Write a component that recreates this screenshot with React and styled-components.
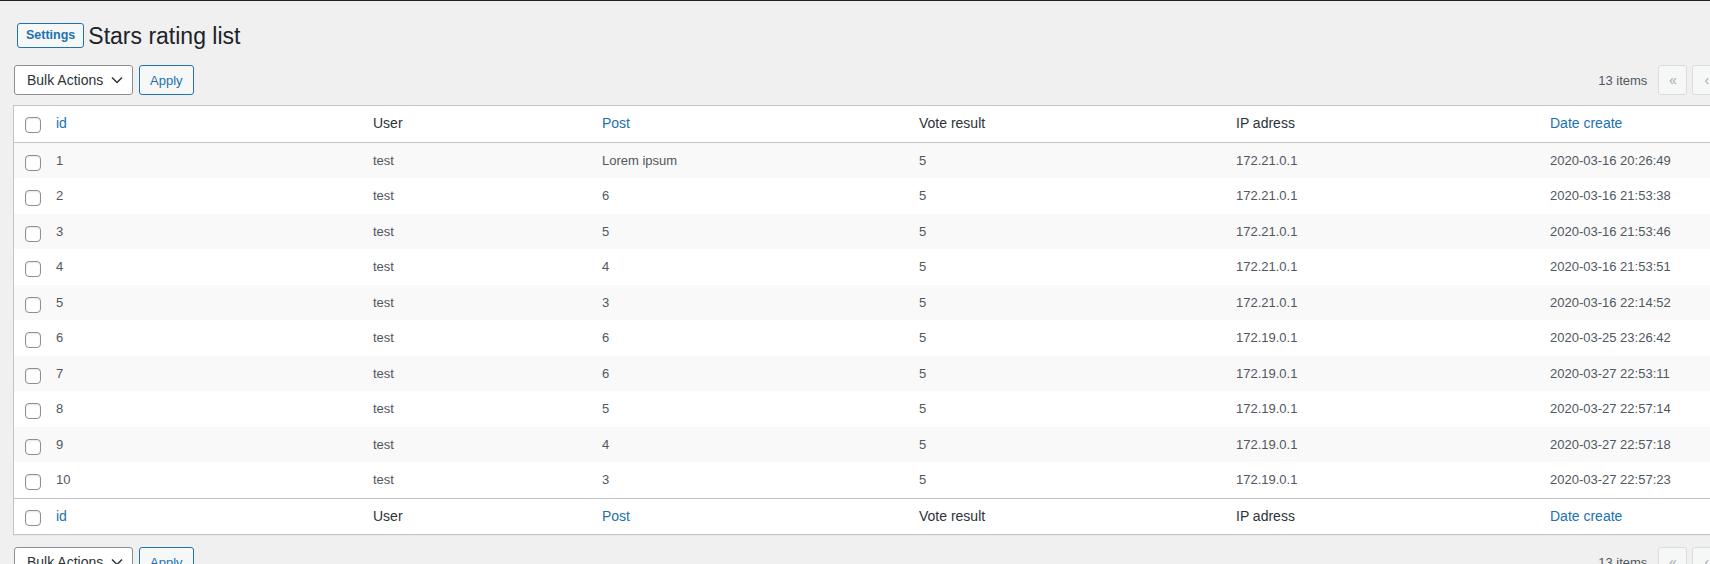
import React from 'react'
import styled, { createGlobalStyle } from 'styled-components';

const GlobalStyle = createGlobalStyle`
  html, body {
    margin: 0;
    padding: 0;
    background: #f0f0f1;
    overflow: hidden;
  }
  body {
    font-family: "Liberation Sans", Arial, sans-serif;
    font-size: 13px;
    color: #3c434a;
  }
`;

let Wrap = styled.div`
  width: 1880px;
  border-top: 1px solid #1d2327;
  padding: 22px 0 0 13px;
  box-sizing: border-box;
`;

let TitleRow = styled.div`
  display: flex;
  align-items: center;
  gap: 4px;
  margin-left: 4px;
  height: 25px;
`;

let SettingsButton = styled.a`
  display: inline-block;
  box-sizing: border-box;
  height: 25px;
  padding: 0 8px;
  line-height: 23px;
  border: 1px solid #2271b1;
  border-radius: 3px;
  background: #f6f7f7;
  color: #2271b1;
  font-size: 12.5px;
  font-weight: 600;
  text-decoration: none;
`;

let Title = styled.h1`
  margin: 0;
  padding-top: 3px;
  font-size: 23px;
  font-weight: 400;
  line-height: 1.3;
  color: #1d2327;
`;

let TableNav = styled.div`
  display: flex;
  justify-content: space-between;
  align-items: center;
  width: 1840px;
  height: 30px;
  margin-top: ${p => p.top}px;
`;

let Actions = styled.div`
  display: flex;
  gap: 6px;
  margin-left: 1px;
`;

let SelectBox = styled.div`
  display: flex;
  align-items: center;
  justify-content: space-between;
  box-sizing: border-box;
  width: 119px;
  height: 30px;
  padding: 0 9px 0 12px;
  border: 1px solid #8c8f94;
  border-radius: 3px;
  background: #fff;
  color: #2c3338;
  font-size: 14px;
`;

let ApplyButton = styled.button`
  box-sizing: border-box;
  height: 30px;
  padding: 0 10px;
  border: 1px solid #2271b1;
  border-radius: 3px;
  background: #f6f7f7;
  color: #2271b1;
  font-family: inherit;
  font-size: 13px;
`;

let Pager = styled.div`
  display: flex;
  align-items: center;
  gap: 5px;
  color: #50575e;
`;

let ItemCount = styled.span`
  margin-right: 6px;
`;

let NavButton = styled.span`
  display: flex;
  align-items: center;
  justify-content: center;
  box-sizing: border-box;
  width: 29px;
  height: 30px;
  border: 1px solid ${p => (p.disabled ? '#dcdcde' : '#2271b1')};
  border-radius: 3px;
  background: #f6f7f7;
  color: ${p => (p.disabled ? '#a7aaad' : '#2271b1')};
  font-size: 14px;
`;

let PageInput = styled.span`
  display: flex;
  align-items: center;
  justify-content: center;
  box-sizing: border-box;
  width: 32px;
  height: 30px;
  border: 1px solid #8c8f94;
  border-radius: 4px;
  background: #fff;
  color: #2c3338;
`;

let Table = styled.table`
  width: 1847px;
  table-layout: fixed;
  border-collapse: separate;
  border-spacing: 0;
  margin-top: 10px;
  border: 1px solid #c3c4c7;
  background: #fff;
  box-shadow: 0 1px 1px rgba(0, 0, 0, 0.04);
`;

let HeadCell = styled.th`
  padding: 8px 10px;
  text-align: left;
  font-size: 14px;
  font-weight: 400;
  line-height: 1.4em;
  color: ${p => (p.link ? '#2271b1' : '#2c3338')};
  border-bottom: ${p => (p.foot ? 'none' : '1px solid #c3c4c7')};
  border-top: ${p => (p.foot ? '1px solid #c3c4c7' : 'none')};
`;

let CheckCell = styled.td`
  padding: ${p => (p.head ? '11px' : '12px')} 0 0 11px;
  vertical-align: top;
  border-bottom: ${p => (p.head && !p.foot ? '1px solid #c3c4c7' : 'none')};
  border-top: ${p => (p.foot ? '1px solid #c3c4c7' : 'none')};
`;

let Row = styled.tr`
  background: ${p => (p.odd ? '#f9f9f9' : '#fff')};
`;

let Cell = styled.td`
  padding: 8px 10px;
  font-size: 13px;
  line-height: 1.5em;
  color: #50575e;
  vertical-align: top;
  white-space: nowrap;
`;

let CheckBox = styled.span`
  display: block;
  box-sizing: border-box;
  width: 16px;
  height: 16px;
  border: 1px solid #8c8f94;
  border-radius: 4px;
  background: #fff;
  box-shadow: inset 0 1px 2px rgba(0, 0, 0, 0.1);
`;

const columns = [
  { key: 'id', label: 'id', width: 317, link: true },
  { key: 'user', label: 'User', width: 229 },
  { key: 'post', label: 'Post', width: 317, link: true },
  { key: 'vote', label: 'Vote result', width: 317 },
  { key: 'ip', label: 'IP adress', width: 314 },
  { key: 'date', label: 'Date create', width: 319, link: true },
];

const rows = [
  [1, 'test', 'Lorem ipsum', 5, '172.21.0.1', '2020-03-16 20:26:49'],
  [2, 'test', '6', 5, '172.21.0.1', '2020-03-16 21:53:38'],
  [3, 'test', '5', 5, '172.21.0.1', '2020-03-16 21:53:46'],
  [4, 'test', '4', 5, '172.21.0.1', '2020-03-16 21:53:51'],
  [5, 'test', '3', 5, '172.21.0.1', '2020-03-16 22:14:52'],
  [6, 'test', '6', 5, '172.19.0.1', '2020-03-25 23:26:42'],
  [7, 'test', '6', 5, '172.19.0.1', '2020-03-27 22:53:11'],
  [8, 'test', '5', 5, '172.19.0.1', '2020-03-27 22:57:14'],
  [9, 'test', '4', 5, '172.19.0.1', '2020-03-27 22:57:18'],
  [10, 'test', '3', 5, '172.19.0.1', '2020-03-27 22:57:23'],
];

const Chevron = () => (
  <svg width="12" height="8" viewBox="0 0 12 8">
    <polyline points="1,1.5 6,6.5 11,1.5" fill="none" stroke="#2c3338" strokeWidth="1.5" />
  </svg>
);

const Nav = ({ top }) => (
  <TableNav top={top}>
    <Actions>
      <SelectBox>
        Bulk Actions
        <Chevron />
      </SelectBox>
      <ApplyButton>Apply</ApplyButton>
    </Actions>
    <Pager>
      <ItemCount>13 items</ItemCount>
      <NavButton disabled>«</NavButton>
      <NavButton disabled>‹</NavButton>
      <PageInput>1</PageInput>
      <span>of 2</span>
      <NavButton>›</NavButton>
      <NavButton>»</NavButton>
    </Pager>
  </TableNav>
);

const HeaderRow = ({ foot }) => (
  <tr>
    <CheckCell head foot={foot}>
      <CheckBox />
    </CheckCell>
    {columns.map(col => (
      <HeadCell key={col.key} link={col.link} foot={foot}>
        {col.label}
      </HeadCell>
    ))}
  </tr>
);

const App = () => {
  return (
    <Wrap>
      <GlobalStyle />
      <TitleRow>
        <SettingsButton>Settings</SettingsButton>
        <Title>Stars rating list</Title>
      </TitleRow>
      <Nav top={17} />
      <Table>
        <colgroup>
          <col style={{ width: 32 }} />
          {columns.map(col => (
            <col key={col.key} style={{ width: col.width }} />
          ))}
        </colgroup>
        <thead>
          <HeaderRow />
        </thead>
        <tbody>
          {rows.map((row, i) => (
            <Row key={row[0]} odd={i % 2 === 0}>
              <CheckCell>
                <CheckBox />
              </CheckCell>
              {row.map((value, j) => (
                <Cell key={j}>{value}</Cell>
              ))}
            </Row>
          ))}
        </tbody>
        <tfoot>
          <HeaderRow foot />
        </tfoot>
      </Table>
      <Nav top={12} />
    </Wrap>
  );
};

export default App;
